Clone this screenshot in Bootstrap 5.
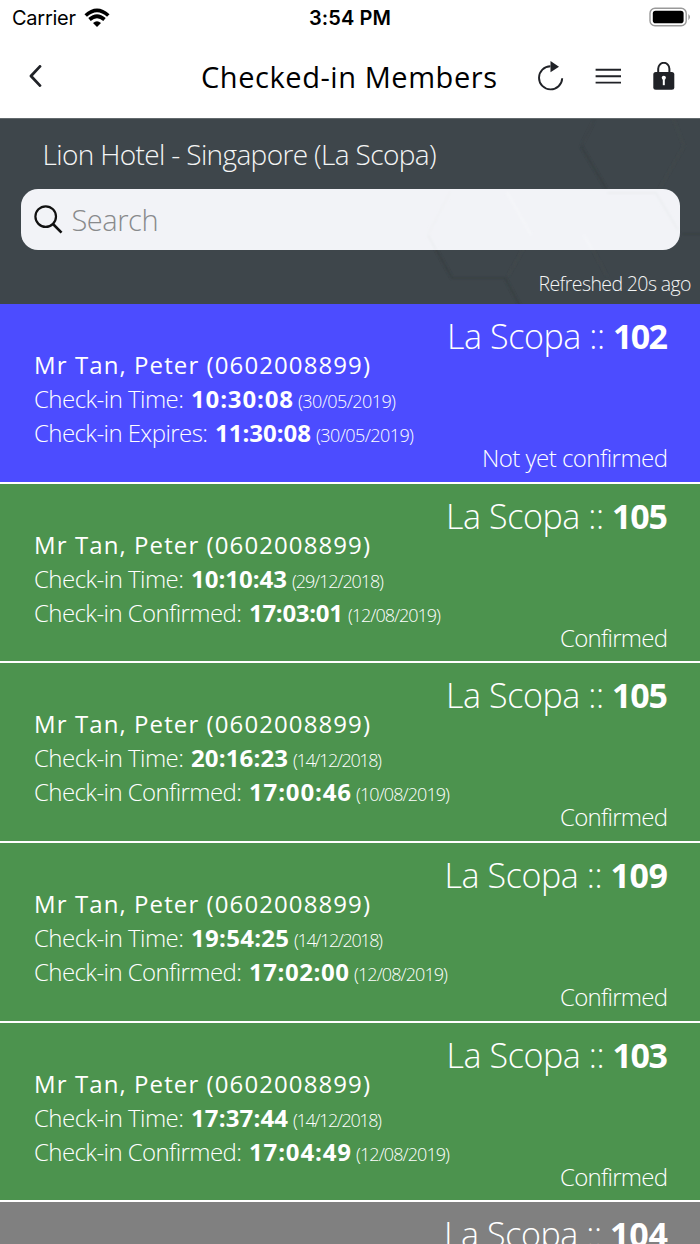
<!DOCTYPE html>
<html lang="en">
<head>
<meta charset="utf-8">
<meta name="viewport" content="width=device-width, initial-scale=1">
<title>Checked-in Members</title>
<link href="https://cdn.jsdelivr.net/npm/bootstrap@5.3.0/dist/css/bootstrap.min.css" rel="stylesheet">
<style>
body{font-family:"Open Sans","Noto Sans",sans-serif;font-weight:300;background:#fff;height:1244px;overflow:hidden;color:#000}
svg{display:block;flex:none}
.t{display:inline-block;white-space:pre;line-height:1}
.statusbar{height:36px;font-family:Inter,sans-serif;font-size:20px;font-weight:400;padding:0 9px 0 12px}
.titlebar{height:82px;padding:0 24px 0 28px}
.title-text{font-size:29px;font-weight:400;margin:-2px 0 0 158px}
.hero{height:186px;background:#3e464b;color:#f4f5f5;padding:14px 20.5px 0;border-top:1px solid #636a6d}
.hero-bg{inset:0}
.venue{font-size:28px;padding-left:22px;height:56.3px}
.search{height:61px;border-radius:17px;background:#f2f3f7;padding-left:12px;color:#888a8c;font-size:29px}
.refreshed{font-size:19.5px;margin:19px -12px 0 0}
.entry{height:179.67px;border-bottom:2px solid #fff;color:#fff;padding:15px 32px 0 34px;font-size:24px}
.pending{background:#4c4cff}.ok{background:#4c934e}.past{background:#808080}
.room{font-size:34px;height:34px;line-height:34px}
.member{font-weight:400;height:40px;margin-top:-6px}
.ln{height:34px}
.clock{margin:0 5px 0 7px}
.state{height:30px;margin-top:-15px}
.when{font-size:18px}
.gap-icon{margin-left:31px}
#list{height:940px;overflow:hidden}
</style>
</head>
<body>
<header>
  <div class="statusbar d-flex align-items-center justify-content-between position-relative">
    <div class="d-flex align-items-center">
      <span class="t" data-w="64">Carrier</span>
      <svg class="ms-2" width="26" height="20" viewBox="0 0 26 20"><g fill="none" stroke="#000" stroke-width="3.7"><path d="M1.7 7.5Q13 -2.8 24.3 7.5"/><path d="M5.5 11.5Q13 4.9 20.5 11.5"/></g><path d="M9 14.9Q13 11.7 17 14.9L13 19z"/></svg>
    </div>
    <div class="position-absolute top-50 start-50 translate-middle fw-semibold"><span class="t" data-w="82">3:54 PM</span></div>
    <svg style="margin-top:-2px" width="42" height="20" viewBox="0 0 42 20"><rect x="1" y="1.2" width="36.2" height="17.6" rx="5" fill="none" stroke="#999" stroke-width="1.4"/><rect x="3.8" y="3.8" width="30.8" height="12.4" rx="2.8"/><path d="M39.4 7v6.2q3.2-3.1 0-6.2" fill="#999"/></svg>
  </div>
  <div class="titlebar d-flex align-items-center">
    <svg width="15" height="24" viewBox="0 0 15 24"><path d="M12 1.4L3 11 12 20.6" fill="none" stroke="#202227" stroke-width="2.8" stroke-linecap="round" stroke-linejoin="round"/></svg>
    <span class="t title-text" data-w="296">Checked-in Members</span>
    <svg class="ms-auto" width="28" height="32" viewBox="0 0 28 32"><path d="M14.5 5.2A11.6 11.6 0 1 0 26.2 17.2" fill="none" stroke="#202227" stroke-width="1.9"/><path d="M14.5 0L23 5.7 14.5 11.2z" fill="#202227"/></svg>
    <svg class="gap-icon" width="26" height="18" viewBox="0 0 26 18"><path d="M.6 1.8H26M.6 8.2H26M.6 14.6H26" stroke="#202227" stroke-width="1.9"/></svg>
    <svg class="gap-icon" width="24" height="30" viewBox="0 0 24 30"><path d="M6.2 11.5V6.8a5.6 6 0 0 1 11.2 0v4.7" fill="none" stroke="#202227" stroke-width="2"/><rect x="1.3" y="10" width="21" height="17.8" rx="2.5" fill="#202227"/><circle cx="11.8" cy="15.8" r="2.1" fill="#fff"/><path d="M11.8 16v7.2" stroke="#fff" stroke-width="2"/></svg>
  </div>
</header>
<section class="hero position-relative">
  <svg class="hero-bg position-absolute" width="700" height="185" viewBox="0 119 700 185">
    <defs><filter id="soft"><feGaussianBlur stdDeviation="1.2"/></filter></defs>
    <g fill="none" stroke="#373f42" stroke-width="2" filter="url(#soft)"><path d="M581 146L607 190M682 234H702M428 235L452 278H505L520 306"/></g>
    <g fill="none" stroke="#3b4347" stroke-width="1.5" filter="url(#soft)"><path d="M595 119L581 146"/></g>
    <g fill="none" stroke="#42494b" stroke-width="1.5" filter="url(#soft)"><path d="M673 118L684 146 660 188M531 235L508 276M592 248L607 276"/></g>
  </svg>
  <div class="position-relative">
    <div class="venue"><span class="t" data-w="394">Lion Hotel - Singapore (La Scopa)</span></div>
    <div class="search d-flex align-items-center position-relative">
      <svg class="position-absolute top-0 start-0" width="659" height="61" viewBox="21 189 659 61"><g fill="none" stroke="#eceef1" stroke-width="2" filter="url(#soft)"><path d="M607 193H656L678 230M428 235L436 250"/></g><g fill="none" stroke="#f0f1f4" stroke-width="2" filter="url(#soft)"><path d="M450 192L428 235"/></g><g fill="none" stroke="#f5f6f9" stroke-width="2" filter="url(#soft)"><path d="M507 192L531 235M584 235L592 250"/></g></svg>
      <svg width="31" height="30" viewBox="0 0 31 30"><circle cx="12.7" cy="11.6" r="10.3" fill="none" stroke="#111" stroke-width="2.2"/><path d="M20 19L28.5 27.6" stroke="#111" stroke-width="2.6"/></svg>
      <span class="t" data-w="87" style="margin-left:8px">Search</span>
    </div>
    <div class="refreshed text-end"><span class="t" data-w="153">Refreshed 20s ago</span></div>
  </div>
</section>
<main id="list"></main>
<script src="https://cdn.jsdelivr.net/npm/bootstrap@5.3.0/dist/js/bootstrap.bundle.min.js"></script>
<script>
// kind, room, room width, [label, width, time, width, date, width] lines, state, width
const rows=[
 ['pending','102',55,[['Check-in Time:',150,'10:30:08',102,'(30/05/2019)',98],['Check-in Expires:',174,'11:30:08',96,'(30/05/2019)',98]],'Not yet confirmed',186],
 ['ok','105',56,[['Check-in Time:',150,'10:10:43',96,'(29/12/2018)',92],['Check-in Confirmed:',208,'17:03:01',94,'(12/08/2019)',93]],'Confirmed',108],
 ['ok','105',56,[['Check-in Time:',150,'20:16:23',97,'(14/12/2018)',89],['Check-in Confirmed:',208,'17:00:46',102,'(10/08/2019)',94]],'Confirmed',108],
 ['ok','109',57.5,[['Check-in Time:',150,'19:54:25',98,'(14/12/2018)',89],['Check-in Confirmed:',208,'17:02:00',100,'(12/08/2019)',94]],'Confirmed',108],
 ['ok','103',55.5,[['Check-in Time:',150,'17:37:44',97,'(14/12/2018)',89],['Check-in Confirmed:',208,'17:04:49',102,'(12/08/2019)',94]],'Confirmed',108],
 ['past','104',58]];
const t=(s,w,c='')=>`<span class="t ${c}" data-w="${w}">${s}</span>`;
document.getElementById('list').innerHTML=rows.map(([kind,room,rw,lines,state,sw])=>`
<article class="entry ${kind}">
 <div class="room d-flex justify-content-end align-items-baseline">${t('La Scopa ::',158)}${t(room,rw,'fw-bold ms-2')}</div>
 ${lines?`<div class="member">${t('Mr Tan, Peter (0602008899)',336)}</div>
 ${lines.map(l=>`<div class="ln d-flex align-items-baseline">${t(l[0],l[1])}${t(l[2],l[3],'fw-bold clock')}${t(l[4],l[5],'when')}</div>`).join('')}
 <div class="state text-end">${t(state,sw)}</div>`:''}
</article>`).join('');
document.querySelectorAll('[data-w]').forEach(e=>{
 const r=document.createRange();r.selectNodeContents(e);
 const d=(e.dataset.w-r.getBoundingClientRect().width)/(e.textContent.length-1);
 e.style.letterSpacing=d+'px';e.style.marginRight=`calc(${getComputedStyle(e).marginRight} - ${d}px)`;
});
</script>
</body>
</html>
